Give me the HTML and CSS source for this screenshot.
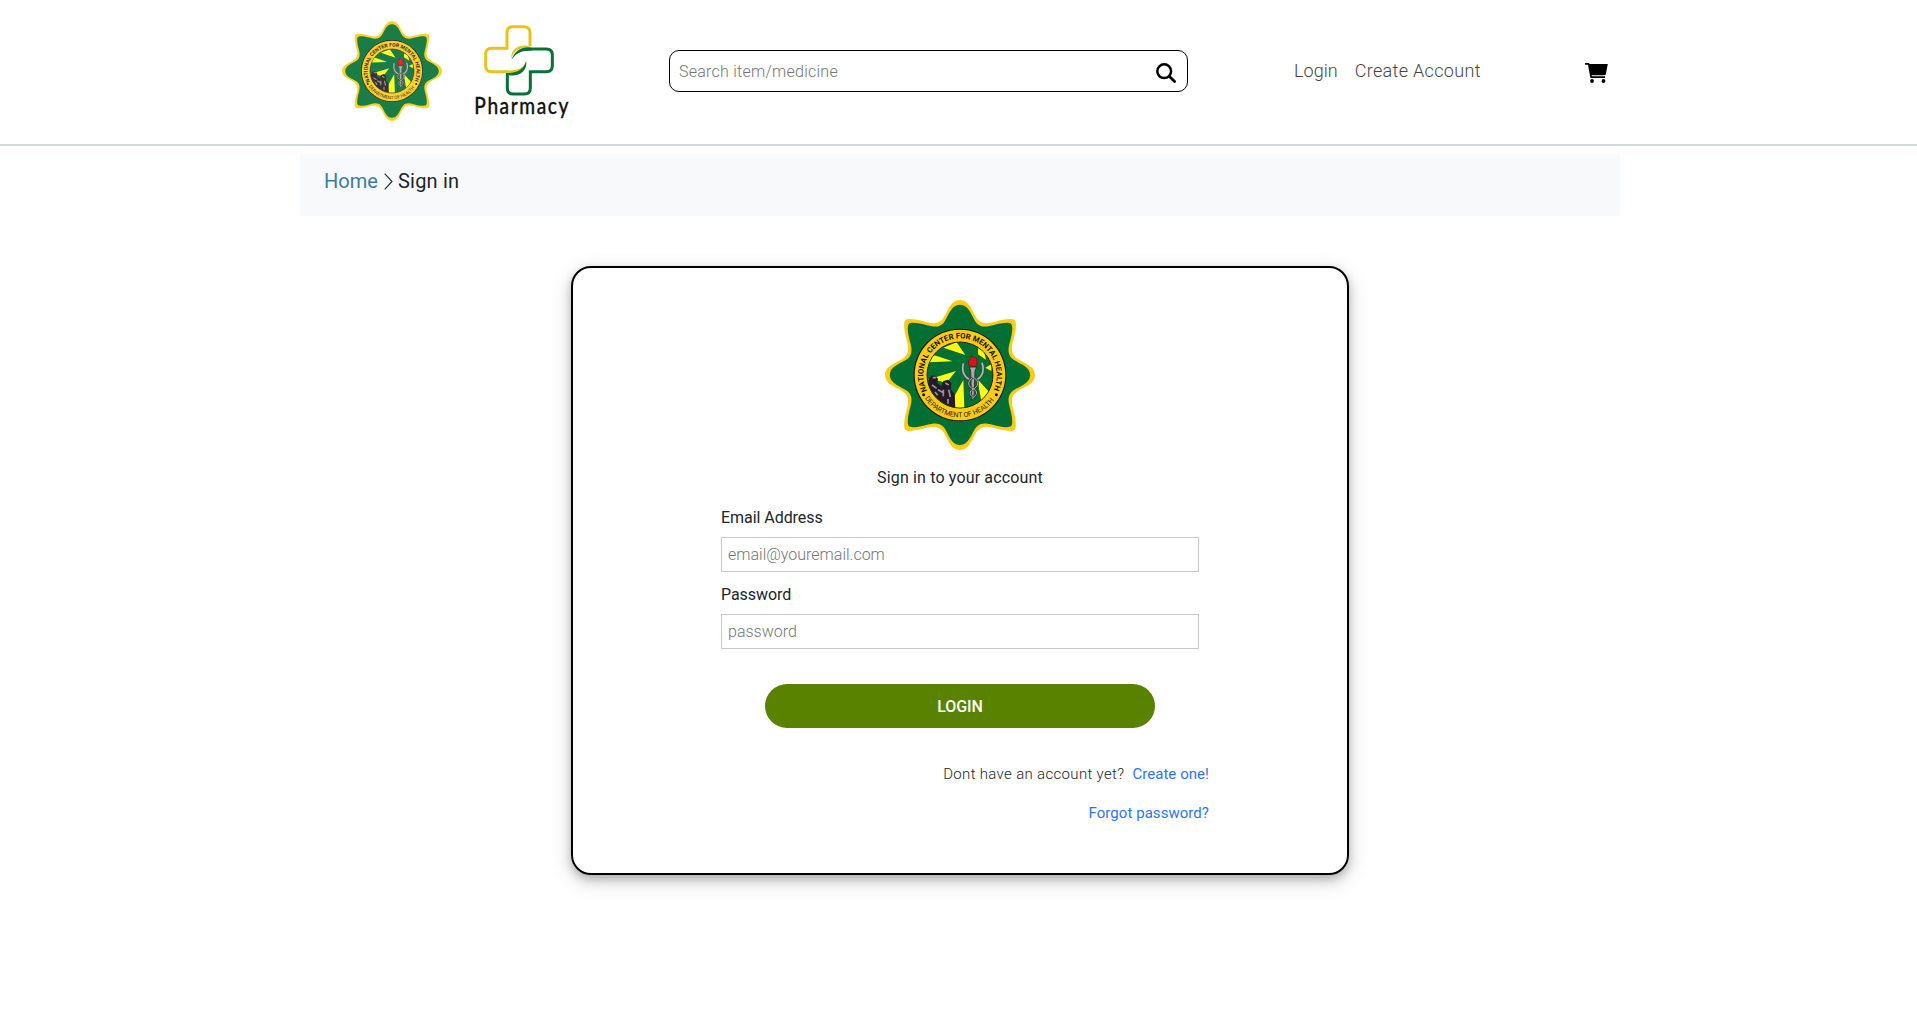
FILE: index.html
```html
<!DOCTYPE html>
<html lang="en">
<head>
<meta charset="utf-8">
<title>Sign in</title>
<link rel="stylesheet" href="styles.css">
</head>
<body>
<header class="header">
  <div class="header-inner">
    <svg class="seal-small" viewBox="-225 -225 450 450">
      <defs>
        <path id="star" d="M0-225C30-225 38-185 52-168C66-152 84-154 105-160C130-167 157-171 164-164C171-157 167-130 160-105C154-84 152-66 168-52C185-38 225-30 225 0C225 30 185 38 168 52C152 66 154 84 160 105C167 130 171 157 164 164C157 171 130 167 105 160C84 154 66 152 52 168C38 185 30 225 0 225C-30 225-38 185-52 168C-66 152-84 154-105 160C-130 167-157 171-164 164C-171 157-167 130-160 105C-154 84-152 66-168 52C-185 38-225 30-225 0C-225-30-185-38-168-52C-152-66-154-84-160-105C-167-130-171-157-164-164C-157-171-130-167-105-160C-84-154-66-152-52-168C-38-185-30-225 0-225Z"/>
        <path id="arc-top" d="M-97 52A110 110 0 1 1 97 52"/>
        <path id="arc-bottom" d="M-113 58A127 127 0 0 0 113 58"/>
        <clipPath id="disc"><circle r="98"/></clipPath>
        <g id="seal">
          <use href="#star" fill="#fc1"/>
          <use href="#star" fill="#036f33" transform="scale(.935)"/>
          <circle r="139" fill="#111"/>
          <circle r="136" fill="#fdcb14"/>
          <circle r="99" fill="#036f33" stroke="#222" stroke-width="3"/>
          <g clip-path="url(#disc)">
            <path fill="#ff1" d="M-50-82L-10-98L16-60ZM-88-60L-72-58L-22-41L-94-38ZM-98 14L-12-12L-42 25L-60 18ZM10 15L13 98H-20L-15 60ZM52 12L92 56L66 90ZM54-80L72-70L78-46L54-62ZM76-22L94-32V-12Z"/>
            <path fill="#241b24" d="M-94 12L-86 2H-74L-66 12L-68 24L-56 34L-50 18L-36 14L-26 24L-27 44L-16 56L-14 100H-60L-100 60Z"/>
            <path fill="none" stroke="#9b929c" stroke-width="5" d="M-82 8h10M-84 30l14 10M-66 44l14 8M-44 24l10 6M-50 44v20M-34 44l5 22M-75 51l8 10M-36 72v14"/>
          </g>
          <path d="M10-35C3-5 18 14 40 16C62 14 76-8 66-37" fill="none" stroke="#424448" stroke-width="9"/>
          <path d="M10-35C3-5 18 14 40 16C62 14 76-8 66-37" fill="none" stroke="#b4b9bc" stroke-width="5"/>
          <path d="M28-24h22l-5 12l-3 86h-7l-3-86Z" fill="#aaa" stroke="#333" stroke-width="3"/>
          <path d="M38 8C20 20 24 36 40 42C56 48 50 62 38 68M42 8C60 20 54 36 40 42C26 48 28 62 42 68" fill="none" stroke="#333" stroke-width="7"/>
          <path d="M38 8C20 20 24 36 40 42C56 48 50 62 38 68M42 8C60 20 54 36 40 42C26 48 28 62 42 68" fill="none" stroke="#b8b8b8" stroke-width="3"/>
          <path d="M29-26C20-42 31-46 36-58C40-50 45-54 49-50C53-43 51-34 48-26Z" fill="#dc1418" stroke="#611" stroke-width="2"/>
          <text class="seal-name"><textPath href="#arc-top" startOffset="1%" textLength="440">NATIONAL CENTER FOR MENTAL HEALTH</textPath></text>
          <text class="seal-dept"><textPath href="#arc-bottom" startOffset="5%" textLength="244">DEPARTMENT OF HEALTH</textPath></text>
          <circle cx="-109" cy="59" r="4.5" fill="#111"/>
          <circle cx="109" cy="59" r="4.5" fill="#111"/>
        </g>
      </defs>
      <use href="#seal"/>
    </svg>
    <svg class="pharmacy" viewBox="0 0 312 312">
      <g fill="none" stroke-width="9">
        <path stroke="#e8c31f" d="M180 78V38Q180 20 162 20H129Q111 20 111 38V85H65Q47 85 47 103V137Q47 155 65 155H112"/>
        <path stroke="#067238" d="M112 160V204Q112 222 130 222H163Q181 222 181 204V155H229Q247 155 247 137V105Q247 87 229 87H178"/>
      </g>
      <path fill="#e8c31f" d="M184 82C158 68 120 82 124 117C128 96 146 79 184 82ZM108 151C138 152 158 150 170 121C169 150 145 168 108 159Z"/>
      <path fill="#067238" d="M184 83C156 77 133 93 125 119C137 100 153 91 184 92ZM108 163C146 176 174 152 168 124C164 145 142 162 108 159Z"/>
      <text class="pharmacy-name" transform="translate(13 283) scale(.82 1)" textLength="344">Pharmacy</text>
    </svg>
    <div class="search">
      <span>Search item/medicine</span>
      <svg class="search-icon" viewBox="0 0 20 20"><circle cx="8.2" cy="8.2" r="6.9" fill="none" stroke="#000" stroke-width="2.5"/><path d="M13.2 13.2L18.6 18.6" stroke="#000" stroke-width="2.8" stroke-linecap="round"/></svg>
    </div>
    <nav class="nav"><a class="nav-login">Login</a><a class="nav-create">Create Account</a></nav>
    <svg class="cart" viewBox="0 0 23 20"><path d="M0 0H3.8L4.5 1H22.8L20.8 11.2Q20.6 12.2 19.5 12.2H6.5L6.8 13.3H20V15H5.4L3 1.7H0Z"/><circle cx="7" cy="18" r="1.9"/><circle cx="18.5" cy="18" r="1.9"/></svg>
  </div>
</header>
<div class="crumbs"><a class="crumb-home">Home</a><svg class="chevron" viewBox="0 0 9 17"><path d="M.7 .7L8 8.5L.7 16.3" fill="none" stroke="#212529" stroke-width="1.1"/></svg><span class="crumb-here">Sign in</span></div>
<main class="card">
  <svg class="seal-large" viewBox="-225 -225 450 450"><use href="#seal"/></svg>
  <h1 class="title">Sign in to your account</h1>
  <form class="form">
    <label class="label label-email">Email Address</label>
    <div class="field field-email">email@youremail.com</div>
    <label class="label label-password">Password</label>
    <div class="field field-password">password</div>
  </form>
  <div class="login-button"><span>LOGIN</span></div>
  <div class="links">
    <p class="link-row"><span class="ask">Dont have an account yet?</span><a class="create-one">Create one!</a></p>
    <p class="link-row"><a class="forgot">Forgot password?</a></p>
  </div>
</main>
</body>
</html>
```
FILE: styles.css
```css
* { box-sizing: border-box; }
body { min-height: 100vh; margin: 0; background: #fff; color: #212529; font-family: Roboto, sans-serif; font-size: 16px; line-height: 24px; white-space: nowrap; }
svg { display: block; flex: none; overflow: visible; }
.header { height: 146px; border-bottom: 2px solid #d3dade; }
.header-inner { display: flex; align-items: flex-start; width: 1320px; margin-left: 300px; padding: 20px 0 0 42px; }
.seal-small { width: 100px; height: 100px; margin-top: 1px; opacity: .9; }
.pharmacy { width: 104px; height: 104px; margin-left: 28px; }
.seal-name { font: bold 23px Roboto, sans-serif; fill: #111; }
.seal-dept { font: 21px Roboto, sans-serif; fill: #222; }
.pharmacy-name { font: 500 70px Lato, sans-serif; fill: #111; stroke: #111; stroke-width: 1px; }
.search { display: flex; justify-content: space-between; align-items: flex-start; width: 519px; height: 42px; margin: 30px 0 0 95px; padding: 9px 11px 0 9px; border: 1px solid #000; border-radius: 10px; color: #757575; font-weight: 300; letter-spacing: .25px; }
.search-icon { width: 20px; height: 20px; margin-top: 3px; }
.nav { display: flex; gap: 17px; margin: 38px 0 0 106px; width: 291px; font-size: 18px; font-weight: 300; line-height: 26px; color: #444; }
.nav-login { letter-spacing: .05px; }
.nav-create { letter-spacing: .32px; }
.cart { width: 23px; height: 20px; margin-top: 43px; }
.crumbs { display: flex; width: 1320px; height: 62px; margin: 8px 0 0 300px; padding: 12px 24px; background: #f8f9fb; font-size: 20px; line-height: 30px; }
.crumb-home { width: 60px; color: #387ca3; }
.chevron { width: 9px; height: 17px; margin: 7px 5px 0 0; }
.crumb-here { letter-spacing: .2px; }
.card { display: flex; flex-direction: column; align-items: center; width: 778px; height: 609px; margin: 50px 0 0 571px; padding-top: 32px; border: 2px solid #000; border-radius: 20px; box-shadow: 0 4px 8px rgba(0,0,0,.2), 0 6px 20px rgba(0,0,0,.19); }
.seal-large { width: 150px; height: 150px; }
.title { margin: 16px 0 0; font-size: 16px; font-weight: 400; line-height: 24px; letter-spacing: .15px; }
.form { width: 478px; margin-top: 15px; }
.label { display: block; height: 24px; padding-top: 1px; }
.label-email, .label-password { letter-spacing: -.05px; }
.field { height: 35px; margin: 8px 0 10px; padding: 5px 6px; border: 1px solid #c8c8c8; color: #757575; font-weight: 300; }
.login-button { display: flex; justify-content: center; width: 390px; height: 44px; margin-top: 25px; padding-top: 11px; border-radius: 22px; background: #598200; color: #fff; font-weight: 500; letter-spacing: -.1px; }
.links { width: 498px; margin-top: 34px; }
.link-row { display: flex; justify-content: flex-end; gap: 8px; margin: 0 0 15px; font-size: 15px; }
.ask { font-weight: 300; letter-spacing: .33px; }
.create-one, .forgot { color: #2f74ee; letter-spacing: .05px; }
```
